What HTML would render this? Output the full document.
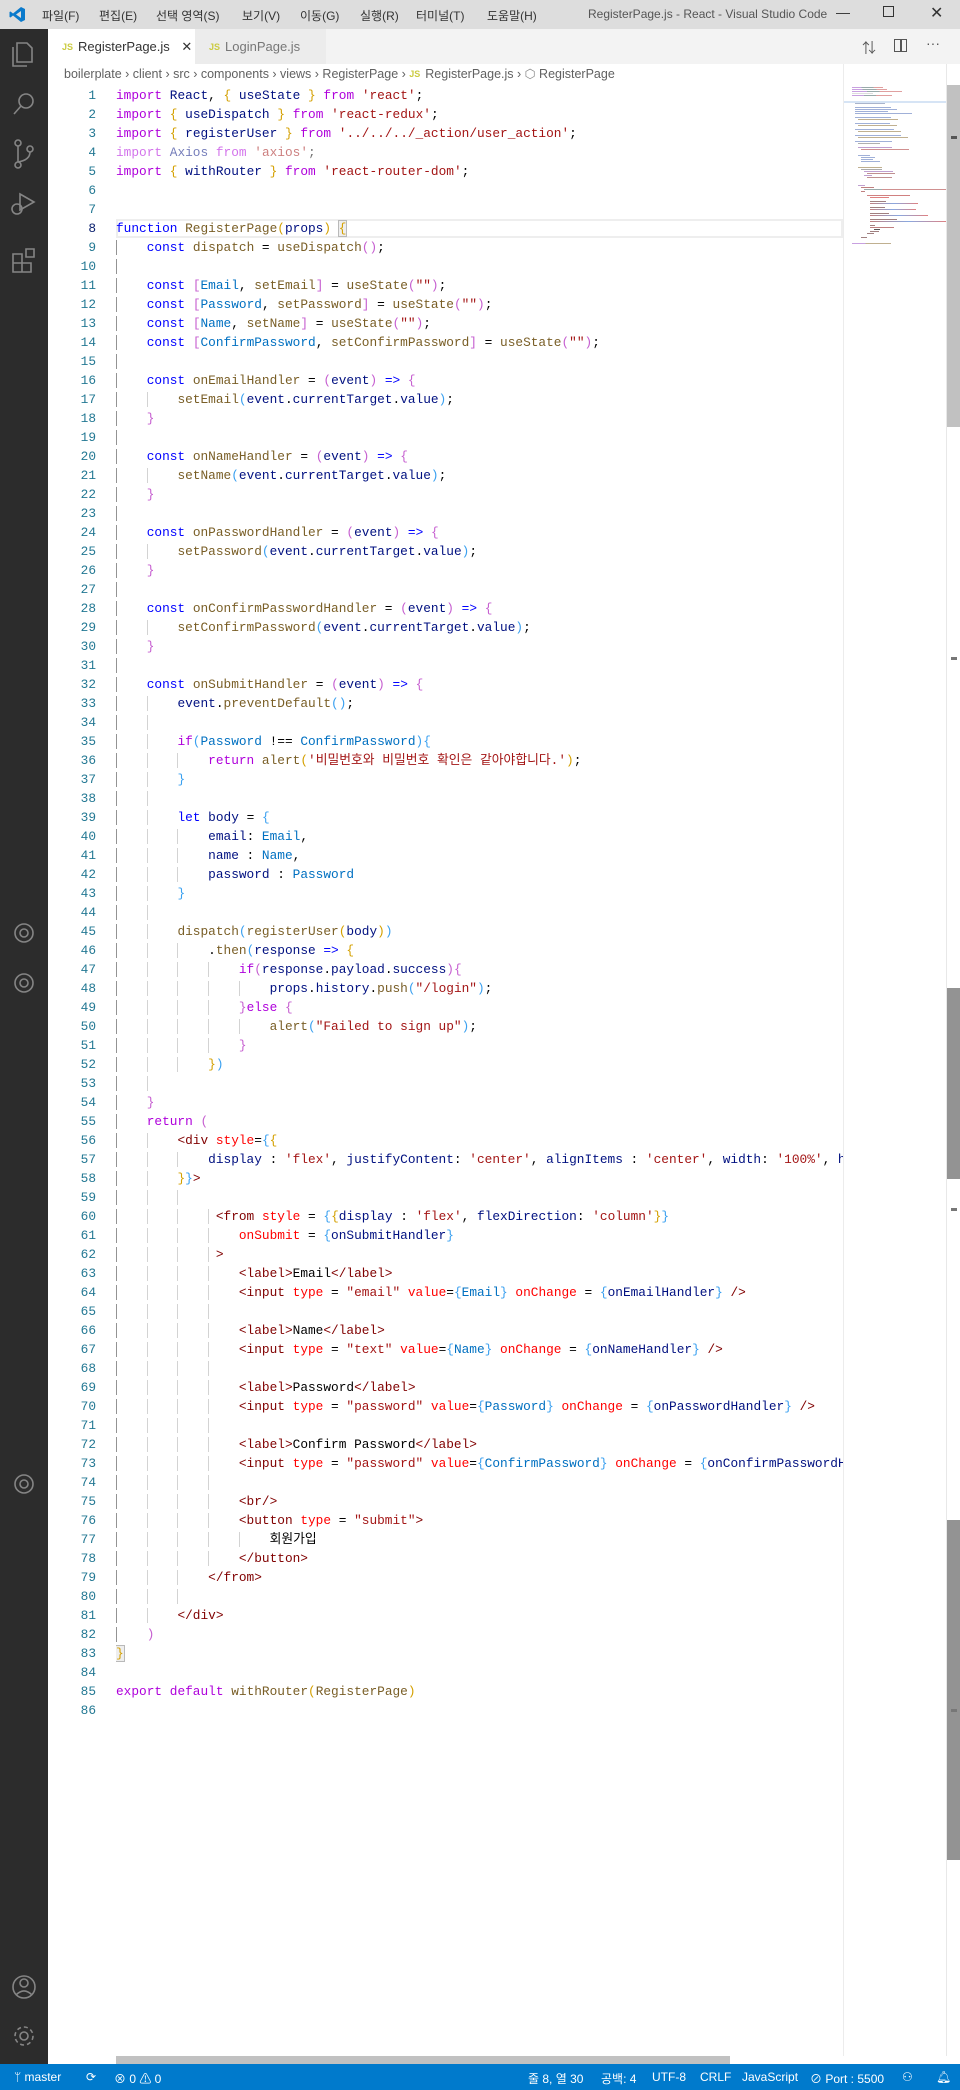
<!DOCTYPE html>
<html><head><meta charset="utf-8"><style>
*{margin:0;padding:0;box-sizing:border-box}
body{width:960px;height:2090px;background:#fff;position:relative;overflow:hidden;font-family:"Liberation Sans","Noto Sans CJK KR",sans-serif}
#title{position:absolute;left:0;top:0;width:960px;height:29px;background:#dddddd;font-size:12px;color:#333}
#title span{position:absolute;top:7px}
#act{position:absolute;left:0;top:29px;width:48px;height:2035px;background:#2c2c2c}
#tabs{position:absolute;left:48px;top:29px;width:912px;height:35px;background:#f3f3f3}
.tab{position:absolute;top:0;height:35px;font-size:13px;color:#333;padding-top:10px}
.js{color:#cbcb41;font-size:9px;font-weight:bold;margin-right:5px;vertical-align:1px}
#bc{position:absolute;left:64px;top:66px;font-size:12.5px;color:#616161}
#gut{position:absolute;left:48px;top:86px;width:48px;font-family:"Liberation Mono",monospace;font-size:12.8px;color:#237893;text-align:right}
#gut div{height:19px;line-height:19px}
#code{position:absolute;left:116px;top:86px;width:727px;height:1970px;overflow:hidden;font-family:"Liberation Mono","Noto Sans CJK KR",monospace;font-size:12.8px;color:#000}
#code div{height:19px;line-height:19px;white-space:pre}
i{font-style:normal;box-shadow:inset 1px 0 #d3d3d3}
i.G{box-shadow:inset 1px 0 #939393}
.k{color:#AF00DB}.b{color:#0000FF}.f{color:#795E26}.v{color:#001080}.s{color:#A31515}.c{color:#0070C1}
.t{color:#800000}.a{color:#FF0000}.y{color:#d4a000}.p{color:#c65fd0}.l{color:#3aa0f0}
.box{outline:1px solid #b9b9b9;background:#eee}
#mini{position:absolute;left:843px;top:64px;width:103px;height:1992px;background:#fff;border-left:1px solid #ececec}
#mini div{position:absolute;height:1.3px}
#sb{position:absolute;left:946px;top:64px;width:14px;height:1992px;background:#fff;border-left:1px solid #e8e8e8}
#status{position:absolute;left:0;top:2064px;width:960px;height:26px;background:#007acc;color:#fff;font-size:12px}
#status span{position:absolute;top:6px}
</style></head><body>
<div id="title">
<svg style="position:absolute;left:9px;top:6px" width="17" height="17" viewBox="0 0 17 17"><path d="M12 1 L16 3 V14 L12 16 L4 9.5 L1.5 11.5 L0.5 11 V6 L1.5 5.5 L4 7.5 Z M12 5 L7 8.5 L12 12 Z" fill="#0a7acc"/></svg>
<span style="left:42px">파일(F)</span><span style="left:99px">편집(E)</span><span style="left:156px">선택 영역(S)</span><span style="left:242px">보기(V)</span><span style="left:300px">이동(G)</span><span style="left:360px">실행(R)</span><span style="left:416px">터미널(T)</span><span style="left:487px">도움말(H)</span>
<span style="left:588px;color:#555">RegisterPage.js - React - Visual Studio Code</span>
<span style="left:836px;top:4px;font-size:14px">—</span>
<span style="left:883px;top:6px;width:11px;height:11px;border:1px solid #333"></span>
<span style="left:930px;top:3px;font-size:16px">✕</span>
</div>
<div id="act">
<svg width="48" height="2035" viewBox="0 0 48 2035" fill="none" stroke="#858585" stroke-width="1.6">
<path d="M17 14 h10 l5 5 v14 h-15 z M13 18 v19 h14"/>
<circle cx="26" cy="72" r="7"/><path d="M21 77 l-7 8"/>
<circle cx="18" cy="114" r="3"/><circle cx="18" cy="136" r="3"/><circle cx="30" cy="120" r="3"/><path d="M18 117 v16 M30 123 q0 8 -12 10"/>
<path d="M20 165 l14 8 l-14 8 z"/><circle cx="17" cy="180" r="5"/>
<path d="M13 225 h9 v9 h-9 z M13 234 v9 h9 v-9 M22 234 h9 v9 h-9 M26 220 h8 v8 h-8 z"/>
<circle cx="24" cy="904" r="9"/><circle cx="24" cy="904" r="4"/>
<circle cx="24" cy="954" r="9"/><circle cx="24" cy="954" r="4"/>
<circle cx="24" cy="1455" r="9"/><circle cx="24" cy="1455" r="4"/>
<circle cx="24" cy="1958" r="11"/><circle cx="24" cy="1954" r="4"/><path d="M16 1966 q8 -8 16 0"/>
<circle cx="24" cy="2007" r="4"/><circle cx="24" cy="2007" r="9" stroke-dasharray="4 3"/>
</svg>
</div>
<div id="tabs">
<div class="tab" style="left:0;width:147px;background:#fff;padding-left:14px"><span class="js">JS</span>RegisterPage.js <span style="margin-left:8px">✕</span></div>
<div class="tab" style="left:147px;width:131px;background:#ececec;padding-left:14px;color:#777"><span class="js">JS</span>LoginPage.js</div>
<span style="position:absolute;left:814px;top:9px;font-size:14px;color:#555">⇅</span>
<span style="position:absolute;left:846px;top:10px;width:13px;height:13px;border:1.5px solid #555"></span>
<span style="position:absolute;left:852px;top:10px;width:1.5px;height:13px;background:#555"></span>
<span style="position:absolute;left:878px;top:6px;font-size:14px;color:#555">···</span>
</div>
<div id="bc">boilerplate › client › src › components › views › RegisterPage › <span class="js">JS</span>RegisterPage.js › <span style="color:#888">⬡</span> RegisterPage</div>
<div id="gut">
<div>1</div><div>2</div><div>3</div><div>4</div><div>5</div><div>6</div><div>7</div><div style="color:#0B216F">8</div><div>9</div><div>10</div><div>11</div><div>12</div><div>13</div><div>14</div><div>15</div><div>16</div><div>17</div><div>18</div><div>19</div><div>20</div><div>21</div><div>22</div><div>23</div><div>24</div><div>25</div><div>26</div><div>27</div><div>28</div><div>29</div><div>30</div><div>31</div><div>32</div><div>33</div><div>34</div><div>35</div><div>36</div><div>37</div><div>38</div><div>39</div><div>40</div><div>41</div><div>42</div><div>43</div><div>44</div><div>45</div><div>46</div><div>47</div><div>48</div><div>49</div><div>50</div><div>51</div><div>52</div><div>53</div><div>54</div><div>55</div><div>56</div><div>57</div><div>58</div><div>59</div><div>60</div><div>61</div><div>62</div><div>63</div><div>64</div><div>65</div><div>66</div><div>67</div><div>68</div><div>69</div><div>70</div><div>71</div><div>72</div><div>73</div><div>74</div><div>75</div><div>76</div><div>77</div><div>78</div><div>79</div><div>80</div><div>81</div><div>82</div><div>83</div><div>84</div><div>85</div><div>86</div>
</div>
<div id="code">
<div><span class="k">import</span> <span class="v">React</span>, <span class="y">{</span> <span class="v">useState</span> <span class="y">}</span> <span class="k">from</span> <span class="s">'react'</span>;</div>
<div><span class="k">import</span> <span class="y">{</span> <span class="v">useDispatch</span> <span class="y">}</span> <span class="k">from</span> <span class="s">'react-redux'</span>;</div>
<div><span class="k">import</span> <span class="y">{</span> <span class="v">registerUser</span> <span class="y">}</span> <span class="k">from</span> <span class="s">'../../../_action/user_action'</span>;</div>
<div style="opacity:.55"><span class="k">import</span> <span class="v">Axios</span> <span class="k">from</span> <span class="s">'axios'</span>;</div>
<div><span class="k">import</span> <span class="y">{</span> <span class="v">withRouter</span> <span class="y">}</span> <span class="k">from</span> <span class="s">'react-router-dom'</span>;</div>
<div></div>
<div></div>
<div style="box-shadow:inset 0 0 0 2px #eeeeee;width:727px"><span class="b">function</span> <span class="f">RegisterPage</span><span class="y">(</span><span class="v">props</span><span class="y">)</span> <span class="y box">{</span></div>
<div><i class="G">    </i><span class="b">const</span> <span class="f">dispatch</span> = <span class="f">useDispatch</span><span class="p">()</span>;</div>
<div><i class="G">    </i></div>
<div><i class="G">    </i><span class="b">const</span> <span class="p">[</span><span class="c">Email</span>, <span class="f">setEmail</span><span class="p">]</span> = <span class="f">useState</span><span class="p">(</span><span class="s">""</span><span class="p">)</span>;</div>
<div><i class="G">    </i><span class="b">const</span> <span class="p">[</span><span class="c">Password</span>, <span class="f">setPassword</span><span class="p">]</span> = <span class="f">useState</span><span class="p">(</span><span class="s">""</span><span class="p">)</span>;</div>
<div><i class="G">    </i><span class="b">const</span> <span class="p">[</span><span class="c">Name</span>, <span class="f">setName</span><span class="p">]</span> = <span class="f">useState</span><span class="p">(</span><span class="s">""</span><span class="p">)</span>;</div>
<div><i class="G">    </i><span class="b">const</span> <span class="p">[</span><span class="c">ConfirmPassword</span>, <span class="f">setConfirmPassword</span><span class="p">]</span> = <span class="f">useState</span><span class="p">(</span><span class="s">""</span><span class="p">)</span>;</div>
<div><i class="G">    </i></div>
<div><i class="G">    </i><span class="b">const</span> <span class="f">onEmailHandler</span> = <span class="p">(</span><span class="v">event</span><span class="p">)</span> <span class="b">=&gt;</span> <span class="p">{</span></div>
<div><i class="G">    </i><i>    </i><span class="f">setEmail</span><span class="l">(</span><span class="v">event</span>.<span class="v">currentTarget</span>.<span class="v">value</span><span class="l">)</span>;</div>
<div><i class="G">    </i><span class="p">}</span></div>
<div><i class="G">    </i></div>
<div><i class="G">    </i><span class="b">const</span> <span class="f">onNameHandler</span> = <span class="p">(</span><span class="v">event</span><span class="p">)</span> <span class="b">=&gt;</span> <span class="p">{</span></div>
<div><i class="G">    </i><i>    </i><span class="f">setName</span><span class="l">(</span><span class="v">event</span>.<span class="v">currentTarget</span>.<span class="v">value</span><span class="l">)</span>;</div>
<div><i class="G">    </i><span class="p">}</span></div>
<div><i class="G">    </i></div>
<div><i class="G">    </i><span class="b">const</span> <span class="f">onPasswordHandler</span> = <span class="p">(</span><span class="v">event</span><span class="p">)</span> <span class="b">=&gt;</span> <span class="p">{</span></div>
<div><i class="G">    </i><i>    </i><span class="f">setPassword</span><span class="l">(</span><span class="v">event</span>.<span class="v">currentTarget</span>.<span class="v">value</span><span class="l">)</span>;</div>
<div><i class="G">    </i><span class="p">}</span></div>
<div><i class="G">    </i></div>
<div><i class="G">    </i><span class="b">const</span> <span class="f">onConfirmPasswordHandler</span> = <span class="p">(</span><span class="v">event</span><span class="p">)</span> <span class="b">=&gt;</span> <span class="p">{</span></div>
<div><i class="G">    </i><i>    </i><span class="f">setConfirmPassword</span><span class="l">(</span><span class="v">event</span>.<span class="v">currentTarget</span>.<span class="v">value</span><span class="l">)</span>;</div>
<div><i class="G">    </i><span class="p">}</span></div>
<div><i class="G">    </i></div>
<div><i class="G">    </i><span class="b">const</span> <span class="f">onSubmitHandler</span> = <span class="p">(</span><span class="v">event</span><span class="p">)</span> <span class="b">=&gt;</span> <span class="p">{</span></div>
<div><i class="G">    </i><i>    </i><span class="v">event</span>.<span class="f">preventDefault</span><span class="l">()</span>;</div>
<div><i class="G">    </i><i>    </i></div>
<div><i class="G">    </i><i>    </i><span class="k">if</span><span class="l">(</span><span class="c">Password</span> !== <span class="c">ConfirmPassword</span><span class="l">){</span></div>
<div><i class="G">    </i><i>    </i><i>    </i><span class="k">return</span> <span class="f">alert</span><span class="y">(</span><span class="s">'비밀번호와 비밀번호 확인은 같아야합니다.'</span><span class="y">)</span>;</div>
<div><i class="G">    </i><i>    </i><span class="l">}</span></div>
<div><i class="G">    </i><i>    </i></div>
<div><i class="G">    </i><i>    </i><span class="b">let</span> <span class="v">body</span> = <span class="l">{</span></div>
<div><i class="G">    </i><i>    </i><i>    </i><span class="v">email</span>: <span class="c">Email</span>,</div>
<div><i class="G">    </i><i>    </i><i>    </i><span class="v">name</span> : <span class="c">Name</span>,</div>
<div><i class="G">    </i><i>    </i><i>    </i><span class="v">password</span> : <span class="c">Password</span></div>
<div><i class="G">    </i><i>    </i><span class="l">}</span></div>
<div><i class="G">    </i><i>    </i></div>
<div><i class="G">    </i><i>    </i><span class="f">dispatch</span><span class="l">(</span><span class="f">registerUser</span><span class="y">(</span><span class="v">body</span><span class="y">)</span><span class="l">)</span></div>
<div><i class="G">    </i><i>    </i><i>    </i>.<span class="f">then</span><span class="l">(</span><span class="v">response</span> <span class="b">=&gt;</span> <span class="y">{</span></div>
<div><i class="G">    </i><i>    </i><i>    </i><i>    </i><span class="k">if</span><span class="p">(</span><span class="v">response</span>.<span class="v">payload</span>.<span class="v">success</span><span class="p">){</span></div>
<div><i class="G">    </i><i>    </i><i>    </i><i>    </i><i>    </i><span class="v">props</span>.<span class="v">history</span>.<span class="f">push</span><span class="l">(</span><span class="s">"/login"</span><span class="l">)</span>;</div>
<div><i class="G">    </i><i>    </i><i>    </i><i>    </i><span class="p">}</span><span class="k">else</span> <span class="p">{</span></div>
<div><i class="G">    </i><i>    </i><i>    </i><i>    </i><i>    </i><span class="f">alert</span><span class="l">(</span><span class="s">"Failed to sign up"</span><span class="l">)</span>;</div>
<div><i class="G">    </i><i>    </i><i>    </i><i>    </i><span class="p">}</span></div>
<div><i class="G">    </i><i>    </i><i>    </i><span class="y">}</span><span class="l">)</span></div>
<div><i class="G">    </i><i>    </i></div>
<div><i class="G">    </i><span class="p">}</span></div>
<div><i class="G">    </i><span class="k">return</span> <span class="p">(</span></div>
<div><i class="G">    </i><i>    </i><span class="t">&lt;div</span> <span class="a">style</span>=<span class="l">{</span><span class="y">{</span></div>
<div><i class="G">    </i><i>    </i><i>    </i><span class="v">display</span> : <span class="s">'flex'</span>, <span class="v">justifyContent</span>: <span class="s">'center'</span>, <span class="v">alignItems</span> : <span class="s">'center'</span>, <span class="v">width</span>: <span class="s">'100%'</span>, <span class="v">height</span>: <span class="s">'100vh'</span></div>
<div><i class="G">    </i><i>    </i><span class="y">}</span><span class="l">}</span><span class="t">&gt;</span></div>
<div><i class="G">    </i><i>    </i><i>    </i></div>
<div><i class="G">    </i><i>    </i><i>    </i><i> </i><span class="t">&lt;from</span> <span class="a">style</span> = <span class="l">{</span><span class="y">{</span><span class="v">display</span> : <span class="s">'flex'</span>, <span class="v">flexDirection</span>: <span class="s">'column'</span><span class="y">}</span><span class="l">}</span></div>
<div><i class="G">    </i><i>    </i><i>    </i><i>    </i><span class="a">onSubmit</span> = <span class="l">{</span><span class="v">onSubmitHandler</span><span class="l">}</span></div>
<div><i class="G">    </i><i>    </i><i>    </i><i> </i><span class="t">&gt;</span></div>
<div><i class="G">    </i><i>    </i><i>    </i><i>    </i><span class="t">&lt;label&gt;</span>Email<span class="t">&lt;/label&gt;</span></div>
<div><i class="G">    </i><i>    </i><i>    </i><i>    </i><span class="t">&lt;input</span> <span class="a">type</span> = <span class="s">"email"</span> <span class="a">value</span>=<span class="l">{</span><span class="c">Email</span><span class="l">}</span> <span class="a">onChange</span> = <span class="l">{</span><span class="v">onEmailHandler</span><span class="l">}</span> <span class="t">/&gt;</span></div>
<div><i class="G">    </i><i>    </i><i>    </i><i>    </i></div>
<div><i class="G">    </i><i>    </i><i>    </i><i>    </i><span class="t">&lt;label&gt;</span>Name<span class="t">&lt;/label&gt;</span></div>
<div><i class="G">    </i><i>    </i><i>    </i><i>    </i><span class="t">&lt;input</span> <span class="a">type</span> = <span class="s">"text"</span> <span class="a">value</span>=<span class="l">{</span><span class="c">Name</span><span class="l">}</span> <span class="a">onChange</span> = <span class="l">{</span><span class="v">onNameHandler</span><span class="l">}</span> <span class="t">/&gt;</span></div>
<div><i class="G">    </i><i>    </i><i>    </i><i>    </i></div>
<div><i class="G">    </i><i>    </i><i>    </i><i>    </i><span class="t">&lt;label&gt;</span>Password<span class="t">&lt;/label&gt;</span></div>
<div><i class="G">    </i><i>    </i><i>    </i><i>    </i><span class="t">&lt;input</span> <span class="a">type</span> = <span class="s">"password"</span> <span class="a">value</span>=<span class="l">{</span><span class="c">Password</span><span class="l">}</span> <span class="a">onChange</span> = <span class="l">{</span><span class="v">onPasswordHandler</span><span class="l">}</span> <span class="t">/&gt;</span></div>
<div><i class="G">    </i><i>    </i><i>    </i><i>    </i></div>
<div><i class="G">    </i><i>    </i><i>    </i><i>    </i><span class="t">&lt;label&gt;</span>Confirm Password<span class="t">&lt;/label&gt;</span></div>
<div><i class="G">    </i><i>    </i><i>    </i><i>    </i><span class="t">&lt;input</span> <span class="a">type</span> = <span class="s">"password"</span> <span class="a">value</span>=<span class="l">{</span><span class="c">ConfirmPassword</span><span class="l">}</span> <span class="a">onChange</span> = <span class="l">{</span><span class="v">onConfirmPasswordHandler</span><span class="l">}</span> <span class="t">/&gt;</span></div>
<div><i class="G">    </i><i>    </i><i>    </i><i>    </i></div>
<div><i class="G">    </i><i>    </i><i>    </i><i>    </i><span class="t">&lt;br/&gt;</span></div>
<div><i class="G">    </i><i>    </i><i>    </i><i>    </i><span class="t">&lt;button</span> <span class="a">type</span> = <span class="s">"submit"</span><span class="t">&gt;</span></div>
<div><i class="G">    </i><i>    </i><i>    </i><i>    </i><i>    </i>회원가입</div>
<div><i class="G">    </i><i>    </i><i>    </i><i>    </i><span class="t">&lt;/button&gt;</span></div>
<div><i class="G">    </i><i>    </i><i>    </i><span class="t">&lt;/from&gt;</span></div>
<div><i class="G">    </i><i>    </i><i>    </i></div>
<div><i class="G">    </i><i>    </i><span class="t">&lt;/div&gt;</span></div>
<div><i class="G">    </i><span class="p">)</span></div>
<div><span class="y box">}</span></div>
<div></div>
<div><span class="k">export</span> <span class="k">default</span> <span class="f">withRouter</span><span class="y">(</span><span class="f">RegisterPage</span><span class="y">)</span></div>
<div></div>
</div>
<div id="mini">
<div style="left:8px;top:23px;width:31px;background:linear-gradient(90deg,#c8a0e0 30%,#9aa 30% 70%,#e0a0a0 70%)"></div>
<div style="left:8px;top:25px;width:35px;background:linear-gradient(90deg,#c8a0e0 30%,#9aa 30% 70%,#e0a0a0 70%)"></div>
<div style="left:8px;top:27px;width:50px;background:linear-gradient(90deg,#c8a0e0 30%,#9aa 30% 55%,#e0a0a0 55%)"></div>
<div style="left:8px;top:29px;width:21px;background:#ddd"></div>
<div style="left:8px;top:31px;width:40px;background:linear-gradient(90deg,#c8a0e0 30%,#9aa 30% 60%,#e0a0a0 60%)"></div>
<div style="left:0;top:37px;width:103px;height:2px;background:#d6e4f5"></div>
<div style="left:11px;top:39px;width:30px;background:#a9b4cc"></div>
<div style="left:11px;top:43px;width:36px;background:#a0b0d8"></div>
<div style="left:11px;top:45px;width:42px;background:#a0b0d8"></div>
<div style="left:11px;top:47px;width:33px;background:#a0b0d8"></div>
<div style="left:11px;top:49px;width:57px;background:#a0b0d8"></div>
<div style="left:11px;top:53px;width:36px;background:#a0b0d8"></div><div style="left:14px;top:55px;width:40px;background:#c0b090"></div>
<div style="left:11px;top:59px;width:35px;background:#a0b0d8"></div><div style="left:14px;top:61px;width:39px;background:#c0b090"></div>
<div style="left:11px;top:65px;width:39px;background:#a0b0d8"></div><div style="left:14px;top:67px;width:43px;background:#c0b090"></div>
<div style="left:11px;top:71px;width:46px;background:#a0b0d8"></div><div style="left:14px;top:73px;width:50px;background:#c0b090"></div>
<div style="left:11px;top:77px;width:37px;background:#a0b0d8"></div><div style="left:14px;top:79px;width:22px;background:#b0b0b0"></div>
<div style="left:14px;top:83px;width:34px;background:#c0a0d0"></div><div style="left:17px;top:85px;width:48px;background:#d09090"></div>
<div style="left:14px;top:91px;width:12px;background:#a0b0d8"></div><div style="left:17px;top:93px;width:14px;background:#a0b0d8"></div><div style="left:17px;top:95px;width:12px;background:#a0b0d8"></div><div style="left:17px;top:97px;width:19px;background:#a0b0d8"></div>
<div style="left:14px;top:103px;width:24px;background:#c0b090"></div><div style="left:17px;top:105px;width:21px;background:#aaa"></div><div style="left:20px;top:107px;width:29px;background:#c0a0d0"></div><div style="left:23px;top:109px;width:28px;background:#c09090"></div><div style="left:20px;top:111px;width:8px;background:#c0a0d0"></div><div style="left:23px;top:113px;width:25px;background:#c09090"></div>
<div style="left:14px;top:121px;width:7px;background:#c0a0d0"></div><div style="left:17px;top:123px;width:13px;background:#c08080"></div><div style="left:20px;top:125px;width:90px;background:linear-gradient(90deg,#9aa 20%,#d09090 20%)"></div><div style="left:17px;top:127px;width:4px;background:#c08080"></div>
<div style="left:23px;top:131px;width:43px;background:#d08080"></div><div style="left:26px;top:133px;width:19px;background:#e08080"></div>
<div style="left:26px;top:137px;width:16px;background:#a08080"></div><div style="left:26px;top:139px;width:48px;background:linear-gradient(90deg,#c08080,#8aa8e0,#e08080)"></div>
<div style="left:26px;top:143px;width:15px;background:#a08080"></div><div style="left:26px;top:145px;width:46px;background:linear-gradient(90deg,#c08080,#8aa8e0,#e08080)"></div>
<div style="left:26px;top:149px;width:19px;background:#a08080"></div><div style="left:26px;top:151px;width:58px;background:linear-gradient(90deg,#c08080,#8aa8e0,#e08080)"></div>
<div style="left:26px;top:155px;width:27px;background:#a08080"></div><div style="left:26px;top:157px;width:77px;background:linear-gradient(90deg,#c08080,#8aa8e0,#e08080)"></div>
<div style="left:26px;top:161px;width:5px;background:#a08080"></div><div style="left:26px;top:163px;width:24px;background:#c08080"></div><div style="left:30px;top:165px;width:6px;background:#555"></div><div style="left:26px;top:167px;width:9px;background:#a08080"></div><div style="left:23px;top:169px;width:7px;background:#a08080"></div>
<div style="left:17px;top:173px;width:6px;background:#a08080"></div>
<div style="left:8px;top:179px;width:39px;background:linear-gradient(90deg,#c8a0e0 35%,#c0b090 35%)"></div>
</div>
<div id="sb">
<div style="position:absolute;left:0;top:21px;width:14px;height:342px;background:#c1c1c1"></div>
<div style="position:absolute;left:0;top:924px;width:14px;height:191px;background:#939393"></div>
<div style="position:absolute;left:0;top:1456px;width:14px;height:340px;background:#939393"></div>
<div style="position:absolute;left:4px;top:72px;width:6px;height:3px;background:#555"></div>
<div style="position:absolute;left:4px;top:593px;width:6px;height:3px;background:#777"></div>
<div style="position:absolute;left:4px;top:1144px;width:6px;height:3px;background:#777"></div>
<div style="position:absolute;left:4px;top:1645px;width:6px;height:3px;background:#777"></div>
</div>
<div style="position:absolute;left:116px;top:2056px;width:614px;height:8px;background:#c1c1c1"></div>
<div id="status">
<span style="left:14px">ᛘ master</span>
<span style="left:86px">⟳</span>
<span style="left:114px">⊗ 0 ⚠ 0</span>
<span style="left:528px">줄 8, 열 30</span>
<span style="left:601px">공백: 4</span>
<span style="left:652px">UTF-8</span>
<span style="left:700px">CRLF</span>
<span style="left:742px">JavaScript</span>
<span style="left:810px">⊘ Port : 5500</span>
<span style="left:902px">⚇</span>
<span style="left:936px">🔔︎</span>
</div>
</body></html>
